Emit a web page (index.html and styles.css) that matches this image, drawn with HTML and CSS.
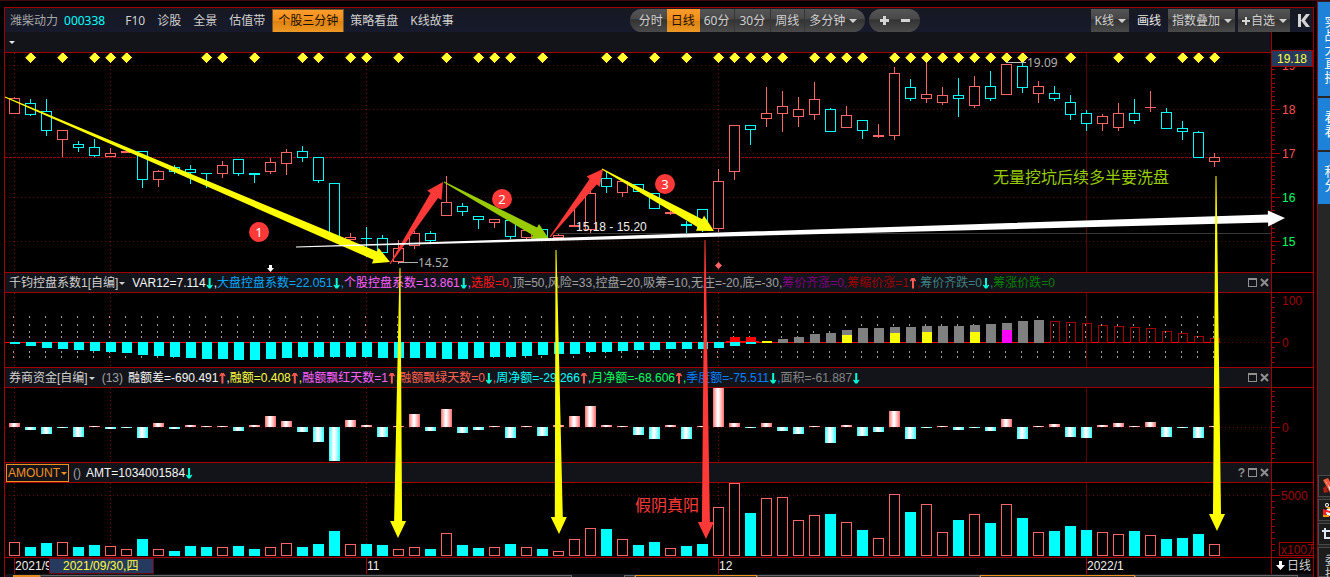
FILE: index.html
```
<!DOCTYPE html>
<html lang="zh-CN">
<head>
<meta charset="utf-8">
<title>潍柴动力 000338</title>
<link rel="stylesheet" href="styles.css">
</head>
<body>
<div class="terminal">
  <main class="board">
    <header class="toolbar">
      <span class="stock-name">潍柴动力</span>
      <span class="stock-code">000338</span>
      <nav class="links">
        <a href="#">F10</a>
        <a href="#">诊股</a>
        <a href="#">全景</a>
        <a href="#">估值带</a>
        <a href="#" class="hot">个股三分钟</a>
        <a href="#">策略看盘</a>
        <a href="#">K线故事</a>
      </nav>
      <div class="periods">
        <button type="button">分时</button>
        <button type="button" class="active">日线</button>
        <button type="button">60分</button>
        <button type="button">30分</button>
        <button type="button">周线</button>
        <button type="button">多分钟<i class="caret"></i></button>
      </div>
      <div class="zoom">
        <button type="button" aria-label="放大"><svg width="9" height="9"><path d="M3 0h3v3h3v3h-3v3h-3v-3h-3v-3h3z"/></svg></button>
        <button type="button" aria-label="缩小"><svg width="9" height="9"><path d="M0 3h9v3h-9z"/></svg></button>
      </div>
      <div class="tools">
        <button type="button" class="tool">K线<i class="caret"></i></button>
        <button type="button" class="plain">画线</button>
        <button type="button" class="tool">指数叠加<i class="caret"></i></button>
        <button type="button" class="tool"><svg width="8" height="8"><path d="M3 0h2v3h3v2h-3v3h-2v-3h-3v-2h3z"/></svg>自选<i class="caret"></i></button>
        <button type="button" class="collapse" aria-label="收起"><svg width="12" height="13"><path d="M0 0h3v13h-3zM8 0h4l-5 6.500 5 6.500h-4l-5-6.500z"/></svg></button>
      </div>
    </header>

    <section class="panel first">
      <div class="panel-head">
        <div class="readout"><button type="button" class="menu" aria-label="菜单"><i class="caret"></i></button></div>
        <div class="gutter"><span class="price-tag">19.18</span></div>
      </div>
      <div class="panel-body">
        <svg class="plot" id="price" viewBox="5 53 1266 219" preserveAspectRatio="xMinYMin"></svg>
        <svg class="axis" id="price-axis" viewBox="1272 53 41 219" preserveAspectRatio="xMinYMin"></svg>
      </div>
    </section>

    <section class="panel">
      <div class="panel-head">
        <div class="readout">
          <button type="button" class="menu">千钧控盘系数1[自编]<i class="caret"></i></button>
          <p class="values wide-gap"><span class="white">VAR12=7.114<b class="down"></b>,</span><span class="sky">大盘控盘系数=22.051<b class="down"></b>,</span><span class="pink">个股控盘系数=13.861<b class="down"></b>,</span><span class="red">选股=0,</span><span class="grey">顶=50,风险=33,控盘=20,吸筹=10,无庄=-20,底=-30,</span><span class="purple">筹价齐涨=0,</span><span class="maroon">筹缩价涨=1<b class="up"></b>,</span><span class="teal">筹价齐跌=0<b class="down"></b>,</span><span class="green">筹涨价跌=0</span></p>
          <div class="win"><button type="button" aria-label="最大化"><svg width="9" height="9"><path d="M0 0h9v9h-9zM1 2v6h7v-6z" fill-rule="evenodd"/></svg></button><button type="button" aria-label="关闭"><svg width="9" height="9"><path d="M1 1l7 7M8 1l-7 7" class="cross"/></svg></button></div>
        </div>
        <div class="gutter"></div>
      </div>
      <div class="panel-body">
        <svg class="plot" id="control" viewBox="5 293 1266 74" preserveAspectRatio="xMinYMin"></svg>
        <svg class="axis" id="control-axis" viewBox="1272 293 41 74" preserveAspectRatio="xMinYMin"></svg>
      </div>
    </section>

    <section class="panel">
      <div class="panel-head">
        <div class="readout">
          <button type="button" class="menu">券商资金[自编]<i class="caret"></i></button>
          <span class="param">(13)</span>
          <p class="values"><span class="white">融额差=-690.491<b class="up"></b>,</span><span class="yellow">融额=0.408<b class="up"></b>,</span><span class="pink">融额飘红天数=1<b class="up"></b>,</span><span class="coral">融额飘绿天数=0<b class="down"></b>,</span><span class="cyan">周净额=-29.266<b class="up"></b>,</span><span class="lime">月净额=-68.606<b class="up"></b>,</span><span class="blue">季度额=-75.511<b class="down"></b>,</span><span class="dim">面积=-61.887<b class="down"></b></span></p>
          <div class="win"><button type="button" aria-label="最大化"><svg width="9" height="9"><path d="M0 0h9v9h-9zM1 2v6h7v-6z" fill-rule="evenodd"/></svg></button><button type="button" aria-label="关闭"><svg width="9" height="9"><path d="M1 1l7 7M8 1l-7 7" class="cross"/></svg></button></div>
        </div>
        <div class="gutter"></div>
      </div>
      <div class="panel-body">
        <svg class="plot" id="funds" viewBox="5 388 1266 74" preserveAspectRatio="xMinYMin"></svg>
        <svg class="axis" id="funds-axis" viewBox="1272 388 41 74" preserveAspectRatio="xMinYMin"></svg>
      </div>
    </section>

    <section class="panel">
      <div class="panel-head">
        <div class="readout">
          <button type="button" class="menu selected">AMOUNT<i class="caret"></i></button>
          <span class="param tight">()</span>
          <p class="values"><span class="white">AMT=1034001584<b class="down"></b></span></p>
          <div class="win"><button type="button" class="help" aria-label="帮助">?</button><button type="button" aria-label="最大化"><svg width="9" height="9"><path d="M0 0h9v9h-9zM1 2v6h7v-6z" fill-rule="evenodd"/></svg></button><button type="button" aria-label="关闭"><svg width="9" height="9"><path d="M1 1l7 7M8 1l-7 7" class="cross"/></svg></button></div>
        </div>
        <div class="gutter"></div>
      </div>
      <div class="panel-body">
        <svg class="plot" id="amount" viewBox="5 483 1266 74" preserveAspectRatio="xMinYMin"></svg>
        <svg class="axis" id="amount-axis" viewBox="1272 483 41 74" preserveAspectRatio="xMinYMin"></svg>
      </div>
    </section>

    <footer class="dates">
      <svg class="plot" id="dates" viewBox="5 558 1266 16" preserveAspectRatio="xMinYMin"></svg>
      <button type="button" class="cycle"><svg width="9" height="10"><path d="M3 0h3v4h3l-4.500 5-4.500-5h3z"/></svg>日线</button>
    </footer>
    <div class="tabs"><i class="tab lit"></i><i class="tab wide"></i><i class="space"></i><i class="tab edge"></i><i class="tab orange"></i><i class="tab mid"></i><i class="tab orange long"></i><i class="tab last"></i></div>
  </main>

  <aside class="side">
    <button type="button" class="side-tab tall">实战大直播</button>
    <button type="button" class="side-tab">看看</button>
    <button type="button" class="side-tab">积分</button>
    <div class="side-tools">
      <button type="button" aria-label="火箭"><svg width="16" height="20"><path d="M1 4l5-2 7 12-5 3z" fill="#f05a3c"/><path d="M2 4l3 3 3 8 2-1z" fill="#fff"/><path d="M1 12l3-2 2 6-4 1z" fill="#b02010"/></svg></button>
      <button type="button" aria-label="QQ"><svg width="16" height="20"><ellipse cx="8" cy="9" rx="6" ry="7" fill="#111"/><ellipse cx="8" cy="12" rx="4" ry="4" fill="#fff"/><circle cx="5" cy="5" r="2" fill="#fff"/><circle cx="5" cy="5" r="1" fill="#111"/><circle cx="10" cy="5" r="2" fill="#fff"/><path d="M3 7h9l-4 2z" fill="#fa0"/><path d="M1 9l7 2 6-2v3l-6 1-4-1v4h-3z" fill="#e22"/><path d="M1 15h6v2h-6zM9 15h6v2h-6z" fill="#f90"/></svg></button>
      <button type="button" aria-label="截图"><svg width="16" height="20"><path d="M3 4v10h10M0 7h10v10" fill="none" stroke="#dfe8f5" stroke-width="2"/></svg></button>
      <button type="button" class="entrust">委托</button>
    </div>
  </aside>

  <svg class="notes" id="notes" viewBox="0 0 1330 577" preserveAspectRatio="xMinYMin"></svg>
</div>
<script src="charts.js"></script>
</body>
</html>
```
FILE: styles.css
```
* { box-sizing: border-box; }

body {
  margin: 0;
  background: #000;
  color: #d0d0d0;
  font: 12px/18px "Noto Sans", "Noto Sans CJK SC", sans-serif;
  overflow: hidden;
}

button {
  margin: 0;
  padding: 0;
  border: 0;
  background: none;
  color: inherit;
  font: inherit;
  white-space: nowrap;
}

a { color: inherit; text-decoration: none; }
p { margin: 0; }
svg { display: block; }

.terminal {
  position: relative;
  display: flex;
  gap: 3px;
  padding-left: 4px;
  border-top: 1px solid #40090f;
}

.board {
  flex: 1;
  min-width: 0;
  margin-top: 6px;
  border: 1px solid #a00000;
  border-bottom: 0;
}

.caret {
  display: inline-block;
  border: 4px solid transparent;
  border-top-color: currentColor;
  border-bottom: 0;
  margin-left: 4px;
  vertical-align: 2px;
}

/* toolbar */
.toolbar {
  display: flex;
  align-items: center;
  height: 24px;
  padding: 1px 3px 0 5px;
  background: linear-gradient(#161821, #161a2b);
  line-height: 24px;
  white-space: nowrap;
}

.stock-name { color: #a8a8a8; }
.stock-code { margin-left: 6px; color: #00ffff; }

.links { display: flex; gap: 12px; margin-left: 20px; }
.hot {
  margin: 0 -6px 0 -5px;
  padding: 0 5px;
  border: 1px solid #6e5426;
  background: linear-gradient(#ff9c2c, #ef8d1b 50%, #dd8210 51%, #ee9826);
  color: #201000;
  line-height: 22px;
}

.periods, .zoom {
  display: flex;
  align-items: stretch;
  height: 23px;
  border-radius: 12px;
  background: linear-gradient(#555, #484848 45%, #333 46%, #4a4a4a);
  overflow: hidden;
}
.periods { margin-left: 176px; }
.periods button { padding: 0 5px 0 4px; border-right: 1px solid #363636; }
.periods button:first-child { padding: 0 4px 0 9px; border: 0; }
.periods button:last-child { padding: 0 8px 0 4px; border: 0; }
.periods .active {
  border: 0;
  background: linear-gradient(#ff9c2c, #ef8d1b 50%, #dd8210 51%, #ee9826);
  color: #201000;
}
.zoom { margin-left: 4px; width: 51px; justify-content: center; gap: 12px; align-items: center; }
.zoom svg, .tools svg { fill: #d4d4d4; }

.tools { display: flex; align-items: center; margin-left: auto; }
.tool {
  display: flex;
  align-items: center;
  height: 23px;
  padding: 0 3px 0 4px;
  background: linear-gradient(#555, #454545 45%, #323232 46%, #4a4a4a);
}
.tool svg { margin-right: 1px; }
.tool + .tool { margin-left: 3px; }
.plain { margin: 0 7px 0 8px; color: #e8e8e8; }
.collapse { margin-left: 8px; }

/* chart panels */
.panel { border-top: 1px solid #a00000; }
.panel.first { border-top: 0; }

.panel-head, .panel-body, .dates {
  display: grid;
  grid-template-columns: minmax(0, 1fr) 42px;
}
.panel-head { height: 19px; }
.first .panel-head { height: 20px; }
.panel-body { border-top: 1px solid #a00000; height: 75px; }
.first .panel-body { height: 220px; }

.readout {
  display: flex;
  align-items: center;
  padding: 0 2px 0 4px;
  background: #13141a;
  font-family: "Liberation Sans", "Noto Sans CJK SC", sans-serif;
  line-height: 18px;
  white-space: nowrap;
}
.gutter { position: relative; border-left: 1px solid #a00000; }
.menu .caret { margin-left: 1px; border-width: 3px 3px 0; }
.first .menu .caret { margin-left: 0; color: #e8e8e8; }
.selected {
  height: 18px;
  margin-left: -3px;
  padding: 0 1px;
  border: 1px solid #f09020;
  color: #f09020;
  line-height: 16px;
}
.param { margin-left: 7px; color: #a0a0a0; }
.param.tight { margin-left: 4px; }
.values { margin-left: 5px; }
.values.wide-gap { margin-left: 7px; }

.up, .down { display: inline-block; width: 8px; height: 11px; vertical-align: -2px; }
.up { background: #ff5a50; clip-path: polygon(3px 0, 5px 0, 7px 3px, 7px 4px, 5px 3px, 5px 11px, 3px 11px, 3px 3px, 1px 4px, 1px 3px); }
.down { background: #00ffd8; clip-path: polygon(3px 0, 5px 0, 5px 8px, 7px 7px, 7px 8px, 5px 11px, 3px 11px, 1px 8px, 1px 7px, 3px 8px); }

.white { color: #f4f4f4; }
.sky { color: #00a8f8; }
.pink { color: #ff60ff; }
.red { color: #ff1414; }
.grey { color: #a0a0a0; }
.dim { color: #848484; }
.purple { color: #800080; }
.maroon { color: #a00000; }
.teal { color: #408080; }
.green { color: #008000; }
.yellow { color: #ffff40; }
.coral { color: #ff6050; }
.cyan { color: #00ffff; }
.lime { color: #00ff60; }
.blue { color: #0080ff; }

.win { display: flex; align-items: center; gap: 3px; margin-left: auto; color: #909090; }
.win svg { fill: #909090; }
.win .cross { stroke: #909090; stroke-width: 2; }
.help { font-weight: bold; }

.price-tag {
  position: absolute;
  top: 18px;
  left: -1px;
  right: 0;
  height: 17px;
  border: 1px solid #a00000;
  background: #26395f;
  color: #ffff40;
  font: 12px/16px "Liberation Sans", sans-serif;
  text-align: center;
}

.plot, .axis { width: 100%; height: 100%; shape-rendering: crispEdges; }
.axis { border-left: 1px solid #a00000; }
.plot text, .axis text, .notes text { font: 12px "Liberation Sans", "Noto Sans CJK SC", sans-serif; }
.notes .extreme, .notes .badge { font-family: "Noto Sans", sans-serif; }
.notes .badge { font-size: 13px; }
.notes .remark { font: 16px "Noto Sans CJK SC", sans-serif; }

.dates { height: 17px; border-top: 1px solid #a00000; }
.cycle {
  display: flex;
  align-items: center;
  gap: 2px;
  padding-left: 4px;
  border-left: 1px solid #a00000;
  line-height: 16px;
}
.cycle svg { fill: #fff; }

.tabs { display: flex; height: 3px; padding: 1px 15px 0 8px; background: #15151c; }
.tab { border: 1px solid #666; border-bottom: 0; background: #2c2c2c; }
.lit { width: 27px; border-color: #e08a20; background: #e08a20; }
.wide { width: 532px; }
.space { width: 52px; }
.edge { width: 11px; }
.orange { width: 122px; border-color: #f09020; }
.mid { width: 223px; }
.long { width: 155px; }
.last { flex: 1; }

/* right-hand strip */
.side {
  display: flex;
  flex-direction: column;
  gap: 2px;
  width: 13px;
  padding-top: 1px;
  border-left: 1px solid #a00000;
  background: #262626;
  overflow: hidden;
}
.side-tab {
  flex: none;
  width: 26px;
  height: 52px;
  padding: 0 6px;
  background: #1e82d8;
  color: #fff;
  font-size: 13px;
  line-height: 14px;
  white-space: normal;
}
.side-tab.tall { height: 94px; }
.side-tools { display: flex; flex-direction: column; gap: 2px; margin-top: auto; }
.side-tools button {
  width: 26px;
  height: 22px;
  padding-left: 3px;
  border: 1px solid #484848;
  background: #1c1c1c;
}
.side-tools .entrust { height: 30px; padding: 6px 3px 0; line-height: 13px; white-space: normal; }

/* drawn remarks over all panels */
.notes { position: absolute; top: -1px; left: 0; width: 100%; height: 577px; pointer-events: none; }
```
FILE: charts.js
```
const NS = 'http://www.w3.org/2000/svg';
const RED = '#ff6464', CYAN = '#00ffff', FRAME = '#a00000', GRID = '#6c0000', FAINT = '#4c0c0c';
const STEP = 16, FIRST = 14;
const at = id => document.getElementById(id);
const mid = i => FIRST + STEP * i;

function add(parent, name, attrs, text) {
  const node = document.createElementNS(NS, name);
  for (const key in attrs) node.setAttribute(key, attrs[key]);
  if (text !== undefined) node.textContent = text;
  parent.appendChild(node);
  return node;
}
const fill = (p, x, y, width, height, color) => add(p, 'rect', { x, y, width, height, fill: color });
const box = (p, x, y, w, h, color, inner = '#000') =>
  add(p, 'rect', { x: x + 0.5, y: y + 0.5, width: w - 1, height: h - 1, stroke: color, fill: inner });
const line = (p, x1, y1, x2, y2, color, dash) =>
  add(p, 'line', { x1, y1, x2, y2, stroke: color, 'stroke-dasharray': dash || 'none' });
const hline = (p, y, x1, x2, color, dash) => line(p, x1, y + 0.5, x2, y + 0.5, color, dash);
const vline = (p, x, y1, y2, color, dash) => line(p, x + 0.5, y1, x + 0.5, y2, color, dash);

function months(p, top, bottom) {
  [0, 6, 22, 44].forEach(i => vline(p, mid(i), top, bottom, '#880000', '1 3'));
  vline(p, mid(67), top, bottom, '#5c0000');
}

// colour, high, body top, body bottom, low
const candles = [
  'r 97 98 113 113', 'c 99 103 114 115', 'c 99 111 130 135', 'r 130 130 139 156', 'c 141 144 147 151',
  'c 139 147 155 156', 'r 148 153 156 156', 'r 151 151 152 152', 'c 151 151 179 187', 'r 170 171 179 186',
  'c 165 167 171 173', 'c 165 169 172 183', 'c 173 173 173 187', 'r 161 165 173 177', 'c 159 159 173 175',
  'c 173 173 174 182', 'r 158 162 171 173', 'r 149 152 163 174', 'c 146 151 157 161', 'c 157 157 180 182',
  'c 183 183 237 237', 'r 233 237 239 241', 'c 227 238 238 256', 'c 235 238 252 256', 'r 240 248 261 263',
  'r 231 233 245 248', 'c 231 233 240 242', 'r 176 202 215 215', 'c 203 206 211 215', 'c 216 216 219 228',
  'r 219 219 222 227', 'c 220 220 236 238', 'r 230 230 237 239', 'c 229 229 238 238', 'r 234 235 237 237',
  'r 206 225 226 226', 'r 185 193 229 232', 'c 171 178 186 192', 'r 181 181 192 196', 'c 184 184 191 191',
  'c 193 193 208 208', 'r 210 212 213 214', 'c 221 224 225 232', 'c 209 209 228 231', 'r 169 181 228 231',
  'r 125 125 171 179', 'c 125 125 129 144', 'r 87 113 118 126', 'r 91 106 113 131', 'r 97 109 116 126',
  'r 82 99 114 119', 'c 108 109 131 131', 'r 106 115 127 127', 'c 120 120 130 138', 'r 124 135 136 137',
  'r 67 73 135 139', 'c 79 87 98 100', 'r 62 94 98 102', 'r 87 95 102 104', 'c 78 95 98 116',
  'r 76 86 105 107', 'c 71 86 98 100', 'r 64 64 94 94', 'c 60 66 87 92', 'r 81 86 93 102',
  'c 86 93 98 100', 'c 95 102 114 119', 'c 110 113 123 130', 'r 114 116 123 130', 'r 103 113 127 130',
  'c 99 113 120 123', 'r 91 107 107 111', 'c 108 112 128 128', 'c 121 128 131 139', 'c 131 132 157 157',
  'r 153 157 161 166'
];

const price = at('price');
months(price, 53, 272);
[65, 109, 153, 197, 241].forEach(y => hline(price, y, 5, 1271, FAINT, '1 3'));
hline(price, 157, 5, 1271, '#a00000', '3 1');
hline(price, 233, 556, 1271, '#383838');
candles.forEach((row, i) => {
  const [kind, ...n] = row.split(' ');
  const [high, top, bottom, low] = n.map(Number);
  const color = kind === 'r' ? RED : CYAN;
  fill(price, mid(i), high, 1, low - high + 1, color);
  if (bottom - top < 2) fill(price, mid(i) - 5, top, 11, bottom - top + 1, color);
  else box(price, mid(i) - 5, top, 11, bottom - top + 1, color);
});
[1, 3, 5, 6, 7, 12, 13, 15, 18, 19, 21, 22, 24, 27, 29, 30, 31, 33, 37, 38, 40, 42, 44, 45, 46, 47, 48,
  50, 51, 52, 53, 55, 56, 57, 58, 59, 60, 61, 62, 63, 66, 69, 71, 73, 74, 75].forEach(i => {
  const x = mid(i) + 0.5;
  add(price, 'path', { d: `M${x} 52l5.500 5.500-5.500 5.500-5.500-5.500z`, fill: '#ffff30', stroke: '#600000', 'stroke-width': 0.5 });
});

const priceAxis = at('price-axis');
for (let k = 0; k < 47; k++) {
  const y = Math.round(65 + k * 4.4);
  if (y < 264) fill(priceAxis, 1271, y, k % 10 ? 4 : 9, 1, FRAME);
}
[[19, 65], [18, 109], [17, 153], [16, 197], [15, 241]].forEach(([v, y]) =>
  add(priceAxis, 'text', { x: 1282, y: y + 5, fill: v > 16 ? '#ff5050' : '#00ff60' }, v));

// control coefficient
const control = at('control');
months(control, 293, 367);
hline(control, 342, 1220, 1271, GRID, '1 3');
fill(control, 5, 342, 1214, 1, '#ff0000');
const below = [2, 4, 6, 7, 8, 9, 10, 11, 13, 14, 15, 16, 17, 17, 18, 18, 17, 16, 15, 15, 15, 15, 15, 16, 16, 16, 16,
  17, 17, 16, 15, 15, 14, 13, 12, 12, 10, 10, 9, 8, 8, 7, 7, 7, 6, 4, 2];
const above = [3, 5, 8, 9, 12, 14, 14, 15, 15, 16, 16, 16, 17, 18, 19, 21, 22];
const outlined = [321, 322, 323, 325, 326, 327, 328, 331, 333, 336, 338];
outlined.forEach((y, k) => box(control, 1050 + STEP * k, y, 10, 343 - y, FRAME, 'none'));
for (let i = 0; i < 76; i++) [316, 324, 331, 336, 351, 356].forEach(y => fill(control, mid(i) - 1, y, 1, 2, '#a0a0a0'));
below.forEach((h, i) => fill(control, mid(i) - 4, 342, 10, h, CYAN));
above.forEach((h, k) => fill(control, mid(48 + k) - 4, 342 - h, 10, h + 1, '#808080'));
[45, 46].forEach(i => fill(control, mid(i) - 4, 337, 10, 5, '#ff0000'));
fill(control, 726, 341, 33, 1, '#ff0000');
[[47, 2, '#ffff00'], [52, 8, '#ffff00'], [55, 10, '#ffff00'], [57, 11, '#ffff00'], [60, 11, '#ffff00'], [62, 13, '#ff00ff']]
  .forEach(([i, h, color]) => fill(control, mid(i) - 4, 343 - h, 10, h, color));

const controlAxis = at('control-axis');
for (let y = 297; y < 365; y += 5) fill(controlAxis, 1271, y, y === 342 ? 9 : 4, 1, FRAME);
add(controlAxis, 'text', { x: 1282, y: 305, fill: FRAME }, '100');
add(controlAxis, 'text', { x: 1282, y: 347, fill: FRAME }, '0');

// broker funds: bar end for each column, zero line at 427
const funds = at('funds');
const ends = [423, 430, 434, 428, 437, 426, 429, 428, 438, 423, 429, 425, 426, 426, 431, 425, 416, 421, 432, 442, 461,
  420, 425, 437, 426, 414, 431, 409, 433, 430, 426, 438, 426, 436, 425, 416, 406, 425, 426, 435, 439, 425, 439, 426,
  387, 423, 428, 423, 431, 434, 426, 443, 425, 436, 432, 411, 439, 428, 426, 430, 428, 431, 419, 439, 426, 424, 437,
  438, 425, 423, 426, 422, 437, 428, 438, 426];
const defs = add(funds, 'defs', {});
[['rise', '#ff6c6c'], ['fall', '#30ffff']].forEach(([id, edge]) => {
  const g = add(defs, 'linearGradient', { id });
  [[0, edge], [0.4, '#ffffff'], [0.5, '#ffffff'], [1, edge]].forEach(([offset, color]) =>
    add(g, 'stop', { offset, 'stop-color': color }));
});
months(funds, 388, 462);
hline(funds, 427, 5, 1271, GRID, '1 3');
ends.forEach((y, i) => y < 427
  ? fill(funds, mid(i) - 5, y, 11, 427 - y, 'url(#rise)')
  : fill(funds, mid(i) - 5, 427, 11, y - 427, 'url(#fall)'));
const fundsAxis = at('funds-axis');
for (let k = -7; k < 7; k++) fill(fundsAxis, 1271, Math.round(427 + k * 5.2), k ? 4 : 9, 1, FRAME);
add(fundsAxis, 'text', { x: 1282, y: 432, fill: FRAME }, '0');

// turnover
const amount = at('amount');
const turnover = ('r542 c547 c543 r542 c547 c545 r546 r549 c539 r549 c551 c546 c547 r547 c546 c549 r547 r543 c547 c544 ' +
  'c531 r544 c544 c545 r549 r547 c549 r533 c545 c548 r547 c544 r547 c549 r551 r539 r528 c529 r539 c545 c542 r548 c546 ' +
  'c544 r507 r483 c513 r498 r497 r520 r515 c514 r522 c530 r538 r494 c512 r504 r532 c520 r514 c523 r504 c518 r532 c531 ' +
  'c526 c530 r532 r534 c531 r535 c539 c538 c534 r544').split(' ');
months(amount, 483, 557);
hline(amount, 495, 5, 1271, GRID, '1 3');
turnover.forEach((item, i) => {
  const y = Number(item.slice(1));
  if (item[0] === 'r') box(amount, mid(i) - 5, y, 11, 556 - y, RED);
  else fill(amount, mid(i) - 5, y, 11, 556 - y, CYAN);
});
const amountAxis = at('amount-axis');
for (let k = -1; k < 10; k++) fill(amountAxis, 1271, Math.round(495 + k * 6.1), k ? 4 : 9, 1, FRAME);
add(amountAxis, 'text', { x: 1281, y: 500, fill: FRAME }, '5000');
box(amountAxis, 1279, 542, 36, 14, FRAME);
add(amountAxis, 'text', { x: 1281, y: 554, fill: FRAME }, 'x100万');

const dates = at('dates');
[[0, '2021/9'], [22, '11'], [44, '12'], [67, '2022/1']].forEach(([i, label]) => {
  vline(dates, mid(i), 558, 574, FRAME);
  add(dates, 'text', { x: mid(i) + 1, y: 570, fill: '#f0f0f0' }, label);
});
box(dates, 49, 558, 105, 16, '#700010', '#26395f');
add(dates, 'text', { x: 63, y: 570, fill: '#ffff40' }, '2021/09/30,四');

// remarks
const notes = at('notes');
function arrow(x1, y1, x2, y2, color, shaft = 8, head = 17, length = 16, start = 1) {
  const d = Math.hypot(x2 - x1, y2 - y1), ux = (x2 - x1) / d, uy = (y2 - y1) / d;
  const bx = x2 - ux * length, by = y2 - uy * length;
  const side = (x, y, w) => [x - uy * w / 2, y + ux * w / 2].map(n => n.toFixed(1)).join(',');
  const points = [side(x1, y1, start), side(bx, by, shaft), side(bx, by, head), `${x2},${y2}`,
    side(bx, by, -head), side(bx, by, -shaft), side(x1, y1, -start)].join(' ');
  add(notes, 'polygon', { points, fill: color });
}
add(notes, 'text', { x: 418, y: 267, fill: '#b0b0b0', class: 'extreme' }, '14.52');
hline(notes, 262, 398, 418, '#b0b0b0');
add(notes, 'text', { x: 1027, y: 67, fill: '#b0b0b0', class: 'extreme' }, '19.09');
hline(notes, 62, 1006, 1026, '#c0c0c0');
add(notes, 'text', { x: 576, y: 231, fill: '#f0f0f0' }, '15.18 - 15.20');
add(notes, 'path', { d: 'M269 265h3v3h2l-3.500 4-3.500-4h2z', fill: '#fff' });
add(notes, 'path', { d: 'M718.500 262l3.500 3.500-3.500 3.500-3.500-3.500z', fill: RED });
arrow(5, 97, 390, 262, '#ffff00', 9, 17);
arrow(390, 264, 443, 182, '#ff3838', 9);
arrow(444, 182, 549, 239, '#99cc00', 9);
arrow(550, 237, 603, 169, '#ff3838', 9);
arrow(296, 247, 1285, 218, '#ffffff', 8, 16, 17);
arrow(602, 169, 714, 231, '#ffff00', 9);
arrow(400, 268, 398, 538, '#ffff00', 8, 16, 17);
arrow(556, 250, 559, 534, '#ffff00', 8, 16, 17);
arrow(705, 240, 706, 539, '#ff3838', 8, 16, 17);
arrow(1216, 176, 1217, 531, '#ffff00', 8, 16, 17);
[[259, 232], [502, 199], [665, 184]].forEach(([cx, cy], k) => {
  add(notes, 'circle', { cx, cy, r: 10, fill: '#ff3838' });
  add(notes, 'text', { x: cx, y: cy + 5, fill: '#fff', 'text-anchor': 'middle', class: 'badge' }, k + 1);
});
add(notes, 'text', { x: 993, y: 183, fill: '#99cc00', class: 'remark' }, '无量挖坑后续多半要洗盘');
add(notes, 'text', { x: 635, y: 511, fill: '#ff3838', class: 'remark' }, '假阴真阳');
```
